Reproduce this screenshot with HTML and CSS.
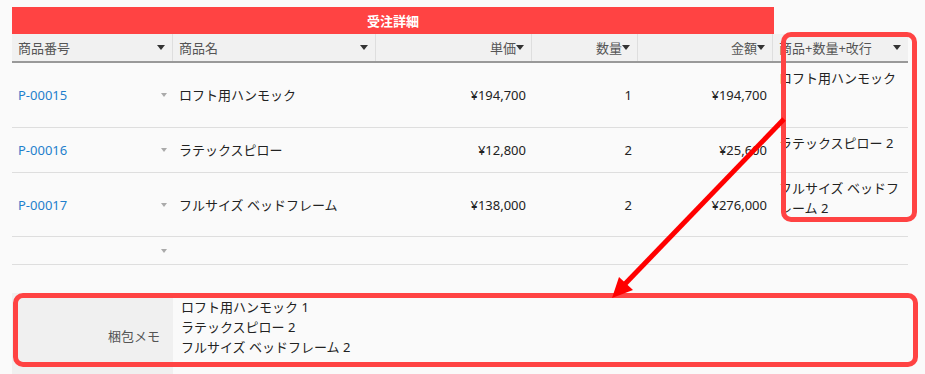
FILE: index.html
```html
<!DOCTYPE html>
<html lang="ja">
<head>
    <meta charset="UTF-8">
    <meta name="viewport" content="width=device-width, initial-scale=1.0">
    <title>受注詳細</title>
    <link rel="stylesheet" href="styles.css">
</head>
<body>

<div class="page">
    <div class="sub-table">
        <div class="row title-row">
            <div class="title">受注詳細</div>
        </div>

        <div class="row head-row">
            <div class="cell c1 head"><span>商品番号</span><i class="caret"></i></div>
            <div class="cell c2 head"><span>商品名</span><i class="caret"></i></div>
            <div class="cell c3 head num"><span>単価</span><i class="caret"></i></div>
            <div class="cell c4 head num"><span>数量</span><i class="caret"></i></div>
            <div class="cell c5 head num"><span>金額</span><i class="caret"></i></div>
            <div class="cell c6 head"><span>商品+数量+改行</span><i class="caret"></i></div>
        </div>

        <div class="row body-row r1">
            <div class="cell c1"><a class="link">P-00015</a><i class="caret light"></i></div>
            <div class="cell c2">ロフト用ハンモック</div>
            <div class="cell c3 num">¥194,700</div>
            <div class="cell c4 num">1</div>
            <div class="cell c5 num">¥194,700</div>
            <div class="cell c6 calc">ロフト用ハンモック</div>
        </div>
        <div class="row body-row r2">
            <div class="cell c1"><a class="link">P-00016</a><i class="caret light"></i></div>
            <div class="cell c2">ラテックスピロー</div>
            <div class="cell c3 num">¥12,800</div>
            <div class="cell c4 num">2</div>
            <div class="cell c5 num">¥25,600</div>
            <div class="cell c6 calc">ラテックスピロー 2</div>
        </div>
        <div class="row body-row r3">
            <div class="cell c1"><a class="link">P-00017</a><i class="caret light"></i></div>
            <div class="cell c2">フルサイズ ベッドフレーム</div>
            <div class="cell c3 num">¥138,000</div>
            <div class="cell c4 num">2</div>
            <div class="cell c5 num">¥276,000</div>
            <div class="cell c6 calc">フルサイズ ベッドフレーム 2</div>
        </div>
        <div class="row body-row r4">
            <div class="cell c1 empty"><i class="caret light"></i></div>
            <div class="cell c2"></div>
            <div class="cell c3"></div>
            <div class="cell c4"></div>
            <div class="cell c5"></div>
            <div class="cell c6"></div>
        </div>
    </div>

    <div class="memo">
        <div class="memo-label">梱包メモ</div>
        <div class="memo-value">ロフト用ハンモック 1<br>ラテックスピロー 2<br>フルサイズ ベッドフレーム 2</div>
    </div>
</div>

<!-- annotations drawn over the screenshot -->
<div class="callout callout-column"></div>
<div class="callout callout-memo"></div>
<svg class="arrow" width="925" height="374" viewBox="0 0 925 374">
    <line x1="784" y1="119" x2="624" y2="285" stroke="#ff0000" stroke-width="5"/>
    <polygon points="612,298 619,277 633,290" fill="#ff0000"/>
</svg>

</body>
</html>
```

FILE: styles.css
```css
* {
    box-sizing: border-box;
}
body {
    margin: 0;
    background-color: #fafafa;
    font-family: "Noto Sans", "Noto Sans CJK JP", sans-serif;
    font-size: 13px;
    line-height: 20px;
    color: #222;
    position: relative;
    height: 374px;
    overflow: hidden;
}
.page {
    padding: 7px 0 0 12px;
}
.sub-table {
    width: 896px;
}
.row {
    display: flex;
}
.title {
    width: 762px;
    height: 27px;
    background-color: #ff4343;
    color: white;
    font-weight: bold;
    display: flex;
    align-items: center;
    justify-content: center;
}
.cell {
    display: flex;
    align-items: center;
    padding: 0 6px;
}
.c1 { width: 161px; }
.c2 { width: 203px; }
.c3 { width: 156px; }
.c4 { width: 106px; }
.c5 { width: 135px; }
.c6 { width: 135px; }

.head-row {
    height: 29px;
    background-color: #f1f1f1;
    border-bottom: 2px solid #999;
}
.head {
    justify-content: space-between;
    color: #555;
    border-right: 1px solid #dedede;
}
.head.c6 {
    border-right: none;
}
.head.num {
    justify-content: flex-end;
}
.caret {
    display: inline-block;
    width: 0;
    height: 0;
    border-left: 4px solid transparent;
    border-right: 4px solid transparent;
    border-top: 5px solid #333;
    margin-right: 1px;
}
.caret.light {
    border-top-color: #aaa;
    border-left-width: 3.5px;
    border-right-width: 3.5px;
    border-top-width: 4px;
    margin-right: 0;
}
.body-row .cell {
    border-bottom: 1px solid #dedede;
}
.body-row .c1 {
    justify-content: space-between;
}
.body-row .num {
    justify-content: flex-end;
}
.body-row .c6.calc {
    align-items: flex-start;
    padding-top: 5px;
}
.empty {
    justify-content: flex-end !important;
}
.r1 { height: 65px; }
.r2 { height: 45px; }
.r3 { height: 64px; }
.r4 { height: 28px; }

.link {
    color: #1f7fcc;
}

.memo {
    display: flex;
    width: 896px;
    height: 86px;
    margin-top: 28px;
}
.memo-label {
    width: 161px;
    background-color: #f0f0f0;
    color: #555;
    display: flex;
    align-items: center;
    justify-content: flex-end;
    padding-right: 13px;
}
.memo-value {
    flex: 1;
    padding: 4px 8px;
}

.callout {
    position: absolute;
    border: 5px solid #ff4343;
    border-radius: 10px;
}
.callout-column {
    left: 781px;
    top: 32px;
    width: 136px;
    height: 190px;
}
.callout-memo {
    left: 13px;
    top: 293px;
    width: 905px;
    height: 74px;
}
.arrow {
    position: absolute;
    left: 0;
    top: 0;
}
```
